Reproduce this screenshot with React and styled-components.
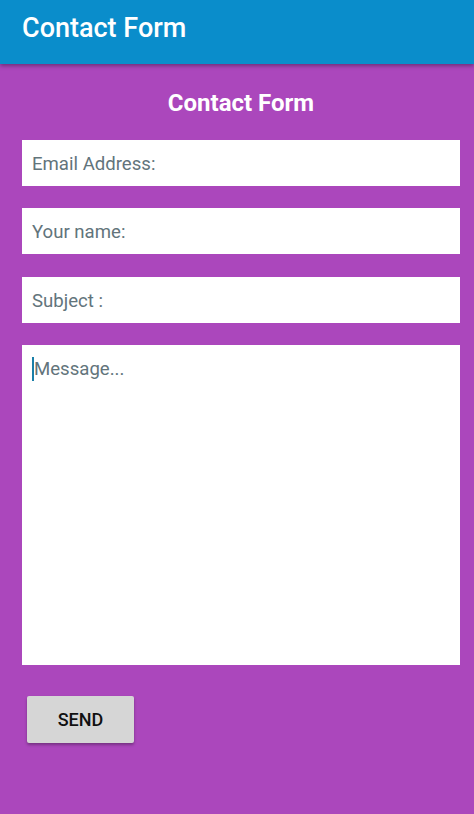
import React from "react";
import styled, { createGlobalStyle } from "styled-components";

const GlobalStyle = createGlobalStyle`
  html, body {
    margin: 0;
    padding: 0;
    height: 100%;
  }
  body {
    font-family: Roboto, "Liberation Sans", sans-serif;
    background: #ab47bc;
  }
  * {
    box-sizing: border-box;
  }
`;

const Screen = styled.div`
  width: 474px;
  min-height: 814px;
  background: #ab47bc;
  display: flex;
  flex-direction: column;
`;

const AppBar = styled.header`
  height: 64px;
  background: #0a8dcb;
  display: flex;
  align-items: center;
  padding: 0 22px 8px;
  box-shadow: 0 2px 4px rgba(0, 0, 0, 0.35);
  position: relative;
  z-index: 1;
`;

const AppTitle = styled.h1`
  margin: 0;
  color: #fff;
  font-size: 27px;
  font-weight: 500;
`;

const Form = styled.form`
  display: flex;
  flex-direction: column;
  padding: 0 14px 0 22px;
`;

const Heading = styled.h2`
  margin: 25px 0 0;
  height: 26px;
  text-align: center;
  color: #fff;
  font-size: 24px;
  font-weight: 700;
  line-height: 28px;
`;

const Field = styled.div`
  height: ${p => p.height || 46}px;
  margin-top: ${p => p.gap || 22}px;
  background: #fff;
  display: flex;
  align-items: ${p => (p.multiline ? "flex-start" : "center")};
  padding: ${p => (p.multiline ? "12px 10px" : "2px 10px 0")};
  color: #62747b;
  font-size: 18.6px;
  line-height: 24px;
`;

const Caret = styled.span`
  display: inline-block;
  width: 2px;
  height: 24px;
  background: #1a7fa8;
`;

const SendButton = styled.button`
  margin: 31px 0 0 5px;
  width: 107px;
  height: 47px;
  align-self: flex-start;
  border: none;
  border-radius: 2px;
  background: #d6d6d6;
  color: #111;
  font-family: Roboto, "Liberation Sans", sans-serif;
  font-size: 18px;
  font-weight: 500;
  box-shadow: 0 2px 3px rgba(0, 0, 0, 0.3);
`;

export default function App() {
  return (
    <Screen>
      <GlobalStyle />
      <AppBar>
        <AppTitle>Contact Form</AppTitle>
      </AppBar>
      <Form onSubmit={e => e.preventDefault()}>
        <Heading>Contact Form</Heading>
        <Field gap={25}>Email Address:</Field>
        <Field>Your name:</Field>
        <Field gap={23}>Subject :</Field>
        <Field multiline height={320}>
          <Caret />
          Message...
        </Field>
        <SendButton type="submit">SEND</SendButton>
      </Form>
    </Screen>
  );
}
